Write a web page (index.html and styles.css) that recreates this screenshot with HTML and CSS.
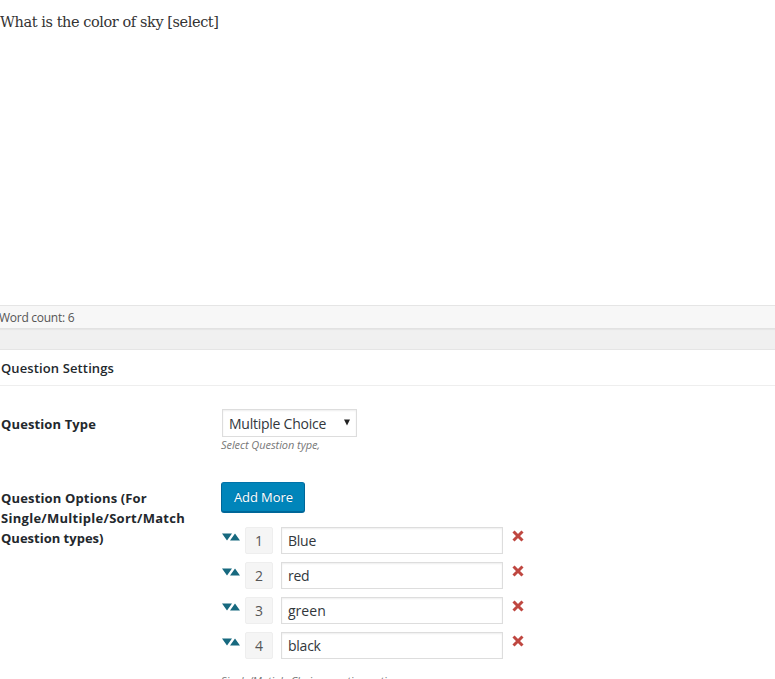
FILE: index.html
```html
<!DOCTYPE html>
<html lang="en">
<head>
<meta charset="utf-8">
<title>Question Settings</title>
<link rel="stylesheet" href="styles.css">
</head>
<body>
<div class="editor"><p><span class="t-editor">What is the color of sky [select]</span></p></div>
<div class="status"><span class="t-count">Word count: 6</span></div>
<section class="panel">
  <h2><span class="t-title">Question Settings</span></h2>
  <div class="field field-type">
    <div class="label"><span class="t-type">Question Type</span></div>
    <div class="control">
      <div class="select"><span class="t-select">Multiple Choice</span><svg width="6" height="7" viewBox="0 0 6 7"><path d="M0 .5H6L3 6.5Z" fill="#222"/></svg></div>
      <p class="hint"><span class="t-hint">Select Question type,</span></p>
    </div>
  </div>
  <div class="field">
    <div class="label"><span class="t-l1">Question Options (For</span><br><span class="t-l2">Single/Multiple/Sort/Match</span><br><span class="t-l3">Question types)</span></div>
    <div class="control">
      <button class="add"><span class="t-add">Add More</span></button>
      <ul>
        <li><svg class="sort" width="18" height="8" viewBox="0 0 18 8"><path d="M0 .5H10L5 7.5ZM8 7.5L13 .5L18 7.5Z"/></svg><span class="num">1</span><span class="input"><span class="t-blue">Blue</span></span><svg class="remove" width="12" height="12" viewBox="0 0 12 12"><path d="M1.5 1.5L10.5 10.5M10.5 1.5L1.5 10.5"/></svg></li>
        <li><svg class="sort" width="18" height="8" viewBox="0 0 18 8"><path d="M0 .5H10L5 7.5ZM8 7.5L13 .5L18 7.5Z"/></svg><span class="num">2</span><span class="input"><span class="t-red">red</span></span><svg class="remove" width="12" height="12" viewBox="0 0 12 12"><path d="M1.5 1.5L10.5 10.5M10.5 1.5L1.5 10.5"/></svg></li>
        <li><svg class="sort" width="18" height="8" viewBox="0 0 18 8"><path d="M0 .5H10L5 7.5ZM8 7.5L13 .5L18 7.5Z"/></svg><span class="num">3</span><span class="input"><span class="t-green">green</span></span><svg class="remove" width="12" height="12" viewBox="0 0 12 12"><path d="M1.5 1.5L10.5 10.5M10.5 1.5L1.5 10.5"/></svg></li>
        <li><svg class="sort" width="18" height="8" viewBox="0 0 18 8"><path d="M0 .5H10L5 7.5ZM8 7.5L13 .5L18 7.5Z"/></svg><span class="num">4</span><span class="input"><span class="t-black">black</span></span><svg class="remove" width="12" height="12" viewBox="0 0 12 12"><path d="M1.5 1.5L10.5 10.5M10.5 1.5L1.5 10.5"/></svg></li>
      </ul>
      <p class="hint hint-options"><span class="t-hint2">Single/Mutiple Choice question options</span></p>
    </div>
  </div>
</section>
</body>
</html>
```
FILE: styles.css
```css
* { box-sizing: border-box; }
body { margin: 0; height: 679px; overflow: hidden; background: #f0f0f0; color: #23282d; font: 13px/20px "Open Sans", "Noto Sans", sans-serif; white-space: nowrap; }
p, ul, h2 { margin: 0; padding: 0; }
.editor { height: 305px; padding-top: 9px; background: #fff; color: #333; font: 14.5px/26px "DejaVu Serif", serif; }
.status { height: 24px; background: #f7f7f7; border-top: 1px solid #e5e5e5; border-bottom: 1px solid #e2e2e2; box-shadow: 0 1px 1px rgba(0,0,0,.04); font-size: 12px; line-height: 24px; color: #555; }
.panel { margin-top: 20px; height: 330px; background: #fff; border-top: 1px solid #e5e5e5; }
h2 { height: 36px; padding-left: 1px; border-bottom: 1px solid #eee; font-size: 13px; line-height: 37px; font-weight: 600; }
.field { display: flex; }
.field-type { height: 96px; padding-top: 23px; }
.label { width: 221px; padding: 6px 0 0 1px; font-weight: 700; }
.field-type .label { padding-top: 5px; }
.select { display: flex; align-items: center; justify-content: space-between; width: 135px; height: 28px; margin-left: 1px; padding: 0 6px; border: 1px solid #ddd; box-shadow: inset 0 1px 2px rgba(0,0,0,.07); font-size: 14px; color: #32373c; }
.select svg { margin-top: -1px; }
.t-select { padding-top: 2px; letter-spacing: -.25px; }
.hint { font-size: 11px; line-height: 16px; font-style: italic; color: #777; }
.add { display: block; width: 84px; height: 31px; padding: 0 0 0 12px; border: 1px solid #006799; border-color: #0073aa #006799 #006799; border-bottom-width: 2px; border-radius: 3px; background: #0085ba; color: #fff; font: inherit; line-height: 28px; text-align: left; text-shadow: 0 -1px 1px #006799; }
.control ul { list-style: none; margin-top: 14px; }
.control li { display: flex; height: 27px; margin-bottom: 8px; }
.sort { margin: 6px 5px 0 1px; fill: #17697f; }
.num { width: 28px; height: 27px; border: 1px solid #eee; border-radius: 2px; background: #f5f5f5; color: #555; text-align: center; font-size: 14px; line-height: 26px; }
.input { width: 222px; height: 27px; margin-left: 8px; padding-left: 6px; border: 1px solid #ddd; box-shadow: inset 0 1px 2px rgba(0,0,0,.07); font-size: 14px; line-height: 26px; color: #32373c; }
.remove { margin: 3px 0 0 9px; stroke: #bf4740; stroke-width: 3; fill: none; }
.hint-options { margin-top: 14px; }
.t-editor { letter-spacing: -.42px; }
.t-count { margin-left: -1px; letter-spacing: -.27px; }
.t-title { letter-spacing: .12px; }
.t-type { letter-spacing: .12px; }
.t-l1 { letter-spacing: .15px; }
.t-l2 { letter-spacing: .28px; }
.t-blue, .t-red, .t-black { letter-spacing: -.25px; }
.t-green { letter-spacing: .02px; }
.t-add { letter-spacing: -.1px; }
.t-hint { letter-spacing: -.06px; }
.t-hint2 { letter-spacing: -.15px; }
```
